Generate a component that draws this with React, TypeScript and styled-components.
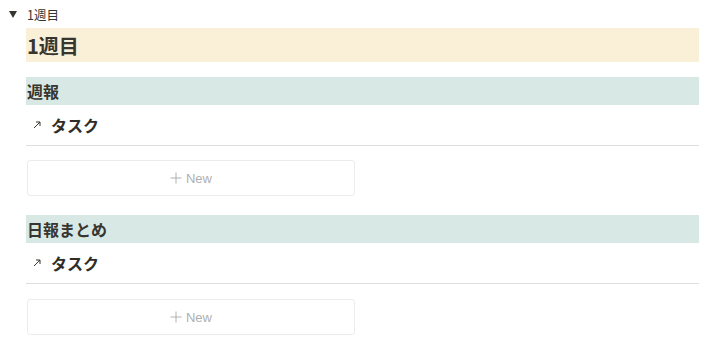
import React from "react";
import styled, { createGlobalStyle } from "styled-components";

const Global = createGlobalStyle`
  html, body { margin: 0; padding: 0; background: #ffffff; }
  body { font-family: "Noto Sans CJK JP", "Noto Sans", sans-serif; color: #37352f; }
`;

const Page = styled.div`
  width: 712px;
  display: flex;
  flex-direction: column;
`;

const ToggleRow = styled.div`
  height: 28px;
  display: flex;
  align-items: center;
  padding-left: 9px;
  gap: 10px;
  font-size: 12.5px;
  color: #37352f;
`;

const Triangle = styled.span`
  width: 0;
  height: 0;
  border-left: 4px solid transparent;
  border-right: 4px solid transparent;
  border-top: 7px solid #37352f;
  margin-top: 1px;
`;

const Children = styled.div`
  margin-left: 26px;
  width: 673px;
  display: flex;
  flex-direction: column;
`;

const Heading = styled.div<{ $bg: string; $size: number; $h: number; $mt: number }>`
  background: ${(p) => p.$bg};
  height: ${(p) => p.$h}px;
  margin-top: ${(p) => p.$mt}px;
  display: flex;
  align-items: center;
  padding-left: 1px;
  font-size: ${(p) => p.$size}px;
  font-weight: 700;
  color: #37352f;
`;

const TaskRow = styled.div`
  height: 40px;
  border-bottom: 1px solid #dedede;
  display: flex;
  align-items: center;
  gap: 10px;
  padding-left: 7px;
  font-size: 16px;
  font-weight: 700;
  color: #2f2d28;
`;

const NewButton = styled.div<{ $mt: number }>`
  margin-top: ${(p) => p.$mt}px;
  width: 326px;
  height: 34px;
  margin-left: 1px;
  border: 1px solid #ececec;
  border-radius: 3px;
  display: flex;
  align-items: center;
  justify-content: center;
  gap: 4px;
  font-family: "Liberation Sans", Arial, sans-serif;
  font-size: 13px;
  color: #b0b0b0;
`;

const Arrow = () => (
  <svg width="8" height="8" viewBox="0 0 8 8" fill="none" stroke="#37352f" strokeWidth="1">
    <path d="M1 7 L7 1 M3 1 H7 V5" />
  </svg>
);

const Plus = () => (
  <svg width="12" height="12" viewBox="0 0 12 12" stroke="#b0b0b0" strokeWidth="1">
    <path d="M6 0.5 V11.5 M0.5 6 H11.5" />
  </svg>
);

const Section = ({ title, mt, nmt }: { title: string; mt: number; nmt: number }) => (
  <>
    <Heading $bg="#d7e8e5" $size={16} $h={28} $mt={mt}>{title}</Heading>
    <TaskRow>
      <Arrow />
      <span>タスク</span>
    </TaskRow>
    <NewButton $mt={nmt}>
      <Plus />
      <span>New</span>
    </NewButton>
  </>
);

export default function App() {
  return (
    <Page>
      <Global />
      <ToggleRow>
        <Triangle />
        <span>1週目</span>
      </ToggleRow>
      <Children>
        <Heading $bg="#faf0d7" $size={20} $h={34} $mt={0}>1週目</Heading>
        <Section title="週報" mt={15} nmt={14} />
        <Section title="日報まとめ" mt={19} nmt={15} />
      </Children>
    </Page>
  );
}
